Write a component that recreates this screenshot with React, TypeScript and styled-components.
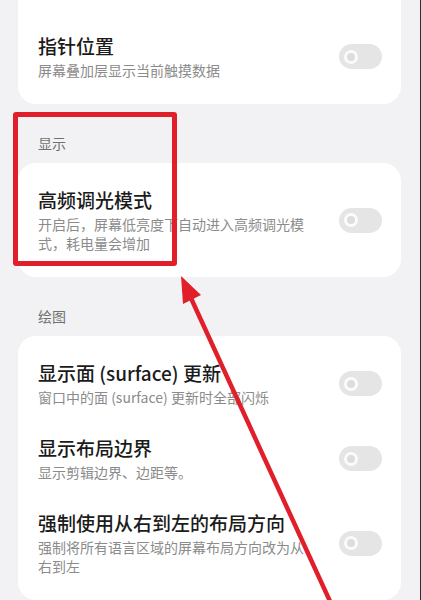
import React from 'react'
import styled, { createGlobalStyle } from 'styled-components'

const GlobalStyle = createGlobalStyle`
    html, body {
        margin: 0;
        padding: 0;
        background: #f2f2f4;
        overflow: hidden;
    }
    body {
        font-family: "Noto Sans CJK SC", "Noto Sans", sans-serif;
    }
`

interface ISetting {
    title: string
    desc: string
}

const topGroup: ISetting[] = [
    { title: '指针位置', desc: '屏幕叠加层显示当前触摸数据' },
]

const displayGroup: ISetting[] = [
    { title: '高频调光模式', desc: '开启后，屏幕低亮度下自动进入高频调光模\n式，耗电量会增加' },
]

const drawGroup: ISetting[] = [
    { title: '显示面 (surface) 更新', desc: '窗口中的面 (surface) 更新时全部闪烁' },
    { title: '显示布局边界', desc: '显示剪辑边界、边距等。' },
    { title: '强制使用从右到左的布局方向', desc: '强制将所有语言区域的屏幕布局方向改为从\n右到左' },
]

const Toggle: React.FC = () => (
    <Track>
        <Knob />
    </Track>
)

const SettingRow: React.FC<ISetting> = ({ title, desc }) => (
    <Row>
        <TextCol>
            <Title>{title}</Title>
            <Desc>{desc}</Desc>
        </TextCol>
        <Toggle />
    </Row>
)

const Group: React.FC<{ label?: string; items: ISetting[]; clipped?: boolean }> = ({ label, items, clipped }) => (
    <>
        {label && <SectionLabel>{label}</SectionLabel>}
        <Card $clipped={clipped}>
            {clipped && (
                <HiddenToggleSlot>
                    <Toggle />
                </HiddenToggleSlot>
            )}
            {items.map((it) => (
                <SettingRow key={it.title} title={it.title} desc={it.desc} />
            ))}
        </Card>
    </>
)

const App: React.FC = () => {
    return (
        <Screen>
            <GlobalStyle />
            <Scroller>
                <Group items={topGroup} clipped />
                <Group label="显示" items={displayGroup} />
                <Group label="绘图" items={drawGroup} />
            </Scroller>

            <HighlightBox />
            <ArrowLayer viewBox="0 0 421 600" width={421} height={600}>
                <line x1={190} y1={296} x2={334} y2={610} stroke="#e01f2b" strokeWidth={4.5} />
                <polygon points="181,276 201,295 183,304" fill="#e01f2b" />
            </ArrowLayer>
        </Screen>
    )
}

export default App

const Screen = styled.div`
    position: relative;
    width: 420px;
    height: 600px;
    overflow: hidden;
    background: #f2f2f4;
    border-right: 1px solid #2b2b2b;
`

const Scroller = styled.div`
    display: flex;
    flex-direction: column;
    margin-top: -20px;
`

const SectionLabel = styled.div`
    padding: 29px 38px 10px;
    font-size: 14px;
    line-height: 20px;
    color: #707070;
`

const Card = styled.div<{ $clipped?: boolean }>`
    margin: 0 19px 0 18px;
    padding: 10px 0;
    padding-top: ${(p) => (p.$clipped ? '0' : '10px')};
    background: #ffffff;
    border-radius: ${(p) => (p.$clipped ? '0 0 18px 18px' : '18px')};
`

/* bottom edge of the previous row's switch, just peeking in at the top */
const HiddenToggleSlot = styled.div`
    display: flex;
    justify-content: flex-end;
    align-items: flex-end;
    height: 39px;
    padding-right: 19px;
    & > div {
        transform: translateY(-19px);
    }
`

const Row = styled.div`
    display: flex;
    align-items: center;
    justify-content: space-between;
    padding: 14px 19px 14px 20px;
`

const TextCol = styled.div`
    display: flex;
    flex-direction: column;
    gap: 2px;
    width: 280px;
`

const Title = styled.div`
    font-size: 19px;
    line-height: 26px;
    font-weight: 500;
    color: #1b1b1b;
`

const Desc = styled.div`
    font-size: 14px;
    line-height: 19px;
    color: #8b8b8b;
    white-space: pre-line;
`

const Track = styled.div`
    display: flex;
    align-items: center;
    flex-shrink: 0;
    width: 43px;
    height: 25px;
    padding-left: 5px;
    box-sizing: border-box;
    border-radius: 13px;
    background: #e5e5e5;
`

const Knob = styled.div`
    width: 14px;
    height: 14px;
    box-sizing: border-box;
    border-radius: 50%;
    border: 3px solid #fbfbfb;
    background: #dddddd;
`

const HighlightBox = styled.div`
    position: absolute;
    left: 13px;
    top: 112px;
    width: 164px;
    height: 154px;
    box-sizing: border-box;
    border: 5px solid #e01f2b;
    border-radius: 3px;
`

const ArrowLayer = styled.svg`
    position: absolute;
    left: 0;
    top: 0;
    pointer-events: none;
`
